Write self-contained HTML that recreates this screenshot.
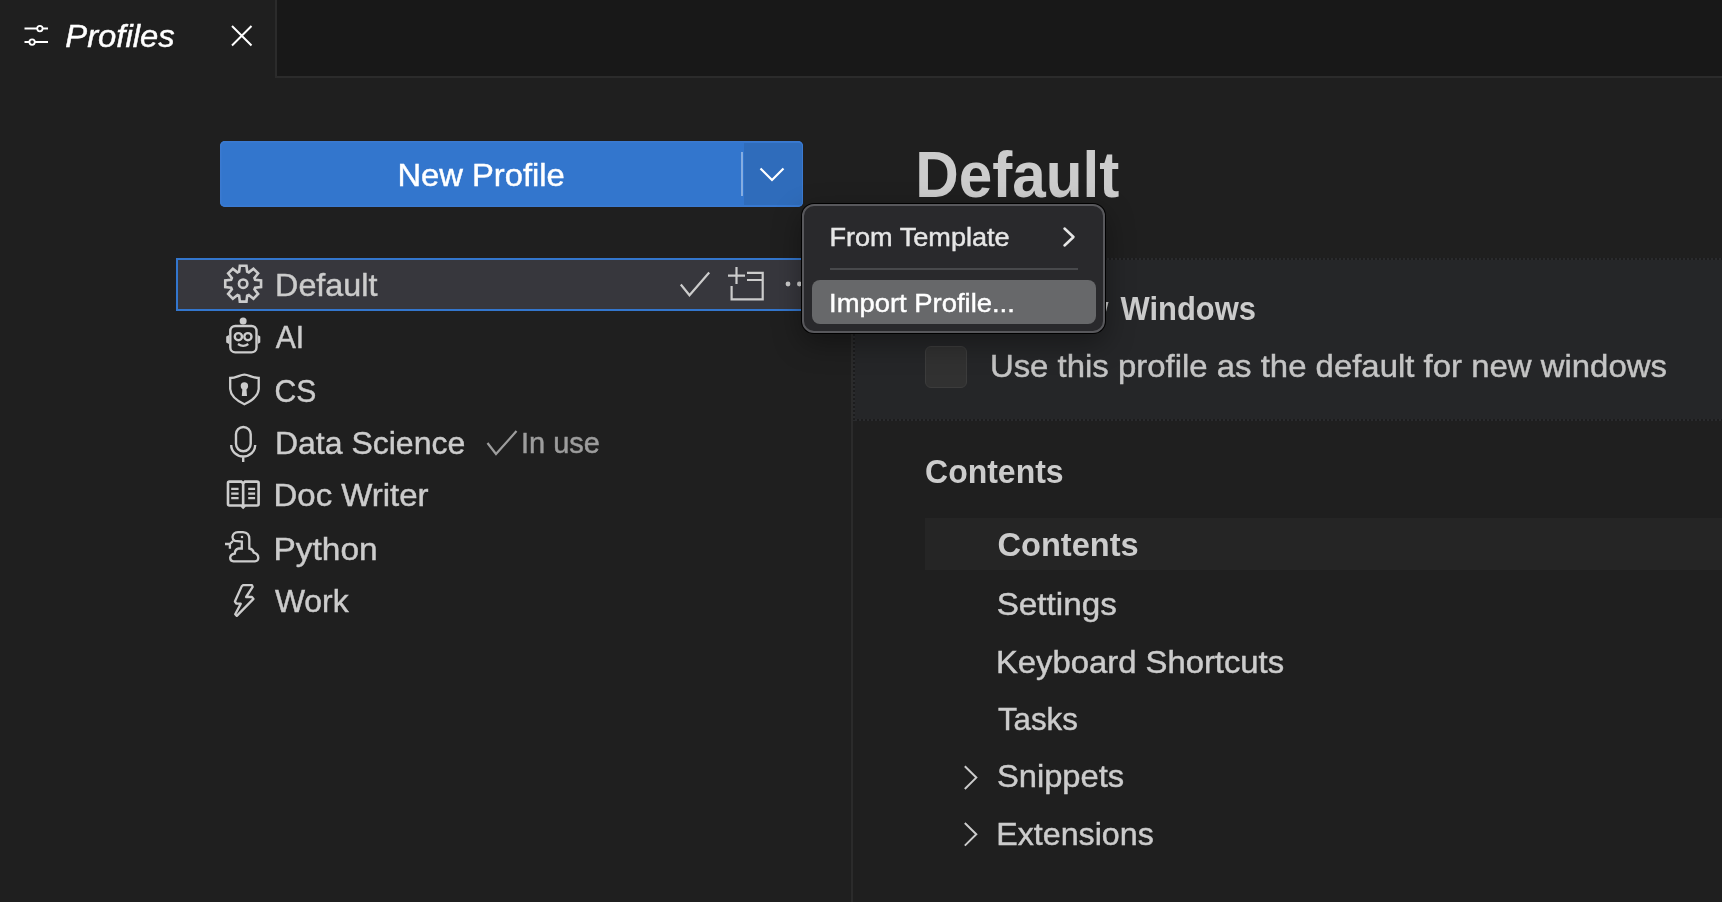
<!DOCTYPE html>
<html><head><meta charset="utf-8">
<style>
html,body{margin:0;padding:0;}
body{width:1722px;height:902px;overflow:hidden;background:#1f1f1f;position:relative;font-family:"Liberation Sans",sans-serif;color:#cccccc;}
.a{position:absolute;}
svg{position:absolute;left:0;top:0;}
text{font-family:"Liberation Sans",sans-serif;white-space:pre;}
</style></head><body>
<!-- tab bar -->
<div class="a" style="left:277px;top:0;width:1445px;height:76px;background:#181818;"></div>
<div class="a" style="left:275px;top:0;width:2px;height:78px;background:#2b2b2b;"></div>
<div class="a" style="left:277px;top:76px;width:1445px;height:2px;background:#2b2b2b;"></div>

<!-- New profile button -->
<div class="a" style="left:220px;top:141px;width:583px;height:66px;background:#3376cd;border-radius:5px;box-shadow:inset 0 0 0 1.5px #3b7ad1;"></div>
<div class="a" style="left:744px;top:142.5px;width:58px;height:62.5px;background:#2f6cbb;border-radius:0 3px 3px 0;"></div>
<div class="a" style="left:741px;top:152px;width:2px;height:44px;background:#85ade1;"></div>

<!-- selected row -->
<div class="a" style="left:176px;top:258px;width:625px;height:49px;background:#37373d;border:2px solid #3376cd;border-right:none;"></div>

<!-- sash -->
<div class="a" style="left:851px;top:250px;width:2px;height:652px;background:#2b2b2b;"></div>

<!-- right panel -->
<div class="a" style="left:853px;top:258px;width:869px;height:163px;background:#252628;"></div>
<div class="a" style="left:853px;top:258px;width:869px;height:2px;background:repeating-linear-gradient(90deg,#1c1c1d 0 2px,#2a2b2d 2px 4px);"></div>
<div class="a" style="left:853px;top:419px;width:869px;height:2px;background:repeating-linear-gradient(90deg,#1c1c1d 0 2px,#2a2b2d 2px 4px);"></div>
<div class="a" style="left:853px;top:258px;width:2px;height:163px;background:repeating-linear-gradient(180deg,#1c1c1d 0 2px,#2a2b2d 2px 4px);"></div>
<div class="a" style="left:925.3px;top:346.4px;width:39.5px;height:39.5px;background:#313131;border:1.5px solid #3c3c3c;border-radius:6px;"></div>
<div class="a" style="left:925px;top:518px;width:797px;height:52px;background:#252525;"></div>

<svg width="1722" height="902" viewBox="0 0 1722 902" style="will-change:transform">
<text x="65.30" y="47.20" font-size="32.00" fill="#ffffff" stroke="#ffffff" stroke-width="0.45" font-style="italic" textLength="109.41" lengthAdjust="spacingAndGlyphs">Profiles</text>
<text x="397.50" y="185.50" font-size="32.00" fill="#ffffff" stroke="#ffffff" stroke-width="0.45" textLength="167.22" lengthAdjust="spacingAndGlyphs">New Profile</text>
<text x="275.10" y="296.00" font-size="32.00" fill="#cccccc" stroke="#cccccc" stroke-width="0.45" textLength="102.29" lengthAdjust="spacingAndGlyphs">Default</text>
<text x="275.70" y="348.00" font-size="32.00" fill="#cccccc" stroke="#cccccc" stroke-width="0.45" textLength="28.43" lengthAdjust="spacingAndGlyphs">AI</text>
<text x="274.50" y="401.80" font-size="32.00" fill="#cccccc" stroke="#cccccc" stroke-width="0.45" textLength="41.75" lengthAdjust="spacingAndGlyphs">CS</text>
<text x="274.90" y="454.00" font-size="32.00" fill="#cccccc" stroke="#cccccc" stroke-width="0.45" textLength="190.33" lengthAdjust="spacingAndGlyphs">Data Science</text>
<text x="520.90" y="452.90" font-size="29.00" fill="#9d9d9d" stroke="#9d9d9d" stroke-width="0.45" textLength="79.00" lengthAdjust="spacingAndGlyphs">In use</text>
<text x="273.50" y="506.40" font-size="32.00" fill="#cccccc" stroke="#cccccc" stroke-width="0.45" textLength="155.04" lengthAdjust="spacingAndGlyphs">Doc Writer</text>
<text x="273.50" y="559.70" font-size="32.00" fill="#cccccc" stroke="#cccccc" stroke-width="0.45" textLength="104.13" lengthAdjust="spacingAndGlyphs">Python</text>
<text x="274.90" y="611.80" font-size="32.00" fill="#cccccc" stroke="#cccccc" stroke-width="0.45" textLength="73.72" lengthAdjust="spacingAndGlyphs">Work</text>
<text x="915.30" y="197.00" font-size="65.00" fill="#cccccc" font-weight="bold" textLength="204.10" lengthAdjust="spacingAndGlyphs">Default</text>
<text x="1040.50" y="319.90" font-size="33.00" fill="#cccccc" font-weight="bold">New</text>
<text x="1120.50" y="319.90" font-size="33.00" fill="#cccccc" font-weight="bold" textLength="135.52" lengthAdjust="spacingAndGlyphs">Windows</text>
<text x="989.90" y="376.70" font-size="32.00" fill="#c4c4c4" stroke="#c4c4c4" stroke-width="0.45" textLength="677.03" lengthAdjust="spacingAndGlyphs">Use this profile as the default for new windows</text>
<text x="925.10" y="483.10" font-size="33.00" fill="#cccccc" font-weight="bold" textLength="138.49" lengthAdjust="spacingAndGlyphs">Contents</text>
<text x="997.50" y="555.60" font-size="33.00" fill="#cccccc" font-weight="bold" textLength="141.19" lengthAdjust="spacingAndGlyphs">Contents</text>
<text x="996.70" y="615.30" font-size="32.00" fill="#cccccc" stroke="#cccccc" stroke-width="0.45" textLength="120.13" lengthAdjust="spacingAndGlyphs">Settings</text>
<text x="995.90" y="673.20" font-size="32.00" fill="#cccccc" stroke="#cccccc" stroke-width="0.45" textLength="288.25" lengthAdjust="spacingAndGlyphs">Keyboard Shortcuts</text>
<text x="997.90" y="729.50" font-size="32.00" fill="#cccccc" stroke="#cccccc" stroke-width="0.45" textLength="80.00" lengthAdjust="spacingAndGlyphs">Tasks</text>
<text x="996.90" y="787.30" font-size="32.00" fill="#cccccc" stroke="#cccccc" stroke-width="0.45" textLength="127.23" lengthAdjust="spacingAndGlyphs">Snippets</text>
<text x="996.30" y="845.40" font-size="32.00" fill="#cccccc" stroke="#cccccc" stroke-width="0.45" textLength="157.43" lengthAdjust="spacingAndGlyphs">Extensions</text>
</svg>

<!-- icons overlay -->
<svg width="1722" height="902" viewBox="0 0 1722 902" fill="none" stroke="#cccccc" stroke-width="2.4">
  <!-- tab settings sliders -->
  <g stroke="#ffffff" stroke-width="2">
    <path d="M24.5 28.6H37.2M42.6 28.6H48M24.5 42.1H29.4M34.8 42.1H48"/>
    <circle cx="39.9" cy="28.6" r="2.7" stroke-width="1.8"/>
    <circle cx="32.1" cy="42.1" r="2.7" stroke-width="1.8"/>
    <path d="M232 26L251.5 45.5M251.5 26L232 45.5"/>
  </g>
  <!-- button chevron -->
  <path d="M760.5 168.5L772 180L783.5 168.5" stroke="#ffffff" stroke-width="2.2"/>
  <!-- gear -->
  <path stroke-width="2.6" stroke-linejoin="miter" d="M239.15 271.70 L239.85 265.80 L246.45 265.80 L247.15 271.70 L248.81 272.39 L253.47 268.71 L258.14 273.38 L254.46 278.04 L255.15 279.70 L261.05 280.40 L261.05 287.00 L255.15 287.70 L254.46 289.36 L258.14 294.02 L253.47 298.69 L248.81 295.01 L247.15 295.70 L246.45 301.60 L239.85 301.60 L239.15 295.70 L237.49 295.01 L232.83 298.69 L228.16 294.02 L231.84 289.36 L231.15 287.70 L225.25 287.00 L225.25 280.40 L231.15 279.70 L231.84 278.04 L228.16 273.38 L232.83 268.71 L237.49 272.39Z"/>
  <circle cx="243.15" cy="283.7" r="4.2" stroke-width="2.6"/>
  <!-- check, new window, dots (selected row) -->
  <path d="M680.8 284.5L689.5 295.3L709.2 272.5" stroke-width="2.2"/>
  <path d="M728 275.6H745M736.5 267V284M747 272.8H762.7V299.3H731.6V286M747 280H762.7" stroke-width="2.2"/>
  <circle cx="788" cy="284" r="2.4" fill="#cccccc" stroke="none"/>
  <circle cx="799.4" cy="284" r="2.4" fill="#cccccc" stroke="none"/>
  <!-- robot -->
  <circle cx="243.15" cy="321" r="3.5" fill="#cccccc" stroke="none"/>
  <rect x="230.3" y="326" width="26.2" height="26.4" rx="5" stroke-width="2.4"/>
  <path d="M229 335V344L226.2 342.5V336.5Z M257.8 335V344L260.3 342.5V336.5Z" fill="#cccccc" stroke="none"/>
  <circle cx="238.4" cy="336.7" r="3.6"/>
  <circle cx="247.9" cy="336.7" r="3.6"/>
  <path d="M238 344Q243.15 347.8 248.3 344" stroke-width="2.2"/>
  <!-- shield -->
  <path d="M230.2 378C236.5 378 240 374.6 244.4 374.6C248.8 374.6 252.3 378 258.7 378V389Q258 398 244.4 404.2Q230.8 398 230.2 389Z" stroke-width="2.3"/>
  <circle cx="244.4" cy="386" r="3.7" fill="#cccccc" stroke="none"/>
  <path d="M242.6 386H246.2L247 396H241.8Z" fill="#cccccc" stroke="none"/>
  <!-- mic -->
  <rect x="236" y="427" width="14.7" height="24.2" rx="7.35"/>
  <path d="M231.2 445A12 11.5 0 0 0 255.2 445M243.2 456.5V462"/>
  <!-- book -->
  <path d="M241.3 481.6H229.5Q228 481.6 228 483.1V504Q228 505.5 229.5 505.5H241.3L243.15 507.4L245 505.5H257Q258.6 505.5 258.6 504V483.1Q258.6 481.6 257 481.6H245L243.15 483.5Z M243.15 483.5V506" stroke-width="2.6"/>
  <path d="M231.2 488.9H238.6M231.2 493.55H238.6M231.2 498.2H238.6M248.2 488.9H255.1M248.2 493.55H255.1M248.2 498.2H255.1" stroke-width="2.2"/>
  <!-- snake -->
  <path d="M241.8 548.5L241.8 541.6L235 541Q232.3 539.5 232.5 537Q233 532.5 238 532.2L243 532.2Q249.3 532.5 249.3 539L249.3 548.5Q252.8 549 253.8 552.7Q258.3 553.8 258.3 558Q258 561.3 255 561.3L233.5 561.3Q230 561 230.2 557.5Q230.6 554.3 234.8 553.5Q235 549.2 238.5 548.5Z M233 541L229.9 544M225 544H229.9V548.8" stroke-width="2.3"/>
  <rect x="240.9" y="535.9" width="2.2" height="2.2" fill="#cccccc" stroke="none"/>
  <!-- zap -->
  <path d="M243.4 585.05H251.9L252.7 586.9L246.1 597H251.9L253.5 598.9L236.8 615.9L235.2 614.3L240.8 603.7H236.5L234.9 601.5L241.8 586.1Z" stroke-width="2.3" stroke-linejoin="round"/>
  <!-- in use check -->
  <path d="M487.5 443L496 454L516.5 431" stroke="#9d9d9d" stroke-width="2.2"/>
  <!-- table chevrons -->
  <path d="M964.8 766.3L976.3 777.6L964.8 789M964.8 823L976.3 834.3L964.8 845.6" stroke-width="2"/>
</svg>

<!-- menu -->
<div class="a" style="left:800.7px;top:202.7px;width:305.8px;height:131.8px;border-radius:13px;background:#000;box-shadow:0 10px 28px rgba(0,0,0,0.35);"></div>
<div class="a" style="left:801.7px;top:203.7px;width:299.8px;height:125.8px;border-radius:12px;background:#29292c;border:2px solid #58585c;"></div>
<div class="a" style="left:830px;top:268px;width:248px;height:2px;background:#48494c;"></div>
<div class="a" style="left:812px;top:280px;width:284px;height:44px;border-radius:8px;background:#67686a;"></div>
<svg width="1722" height="902" viewBox="0 0 1722 902" fill="none" style="will-change:transform">
<text x="829.50" y="246.20" font-size="26.00" fill="#e6e6e6" stroke="#e6e6e6" stroke-width="0.45" textLength="180.12" lengthAdjust="spacingAndGlyphs">From Template</text>
<text x="829.10" y="311.70" font-size="26.00" fill="#ffffff" stroke="#ffffff" stroke-width="0.45" textLength="185.73" lengthAdjust="spacingAndGlyphs">Import Profile...</text>
  <path d="M1064.5 228.5L1073.5 237L1064.5 245.5" stroke="#e6e6e6" stroke-width="2.5" stroke-linecap="round" stroke-linejoin="round"/>
</svg>
</body></html>
